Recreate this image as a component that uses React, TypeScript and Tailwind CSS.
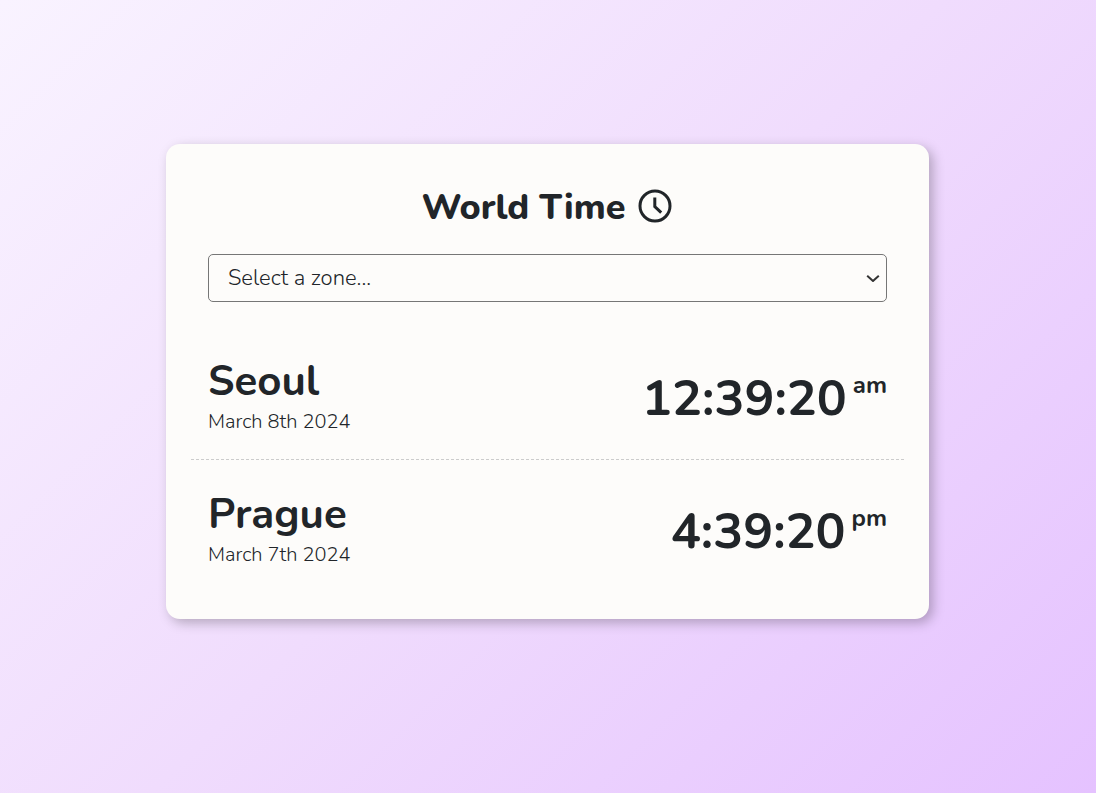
import { useState } from "react";

type Clock = {
  city: string;
  date: string;
  time: string;
  period: "am" | "pm";
};

const clocks: Clock[] = [
  { city: "Seoul", date: "March 8th 2024", time: "12:39:20", period: "am" },
  { city: "Prague", date: "March 7th 2024", time: "4:39:20", period: "pm" },
];

function ClockIcon() {
  return (
    <svg className="mb-1 size-9" viewBox="0 0 36 36" fill="none" stroke="currentColor" strokeWidth="3" aria-hidden="true">
      <circle cx="18" cy="18" r="15" />
      <path d="M17.8 9.5v9l6.4 6.2" />
    </svg>
  );
}

function ClockRow({ city, date, time, period }: Clock) {
  return (
    <li className="flex items-center justify-between border-b border-dashed border-[#cccccc] px-[17px] pt-[30px] pb-[22px] last:border-b-0">
      <div>
        <h2 className="text-[42px] leading-[50px] font-bold">{city}</h2>
        <p className="text-[20px] leading-[30px] font-light">{date}</p>
      </div>
      <p className="flex items-start gap-1.5 pt-1 font-bold">
        <span className="text-[50px] leading-[60px]">{time}</span>
        <span className="text-[24px] leading-8">{period}</span>
      </p>
    </li>
  );
}

export default function App() {
  const [zone, setZone] = useState("");

  return (
    <div className="flex min-h-screen items-center justify-center bg-[linear-gradient(135deg,#f9f3ff,#f0dcfd_50%,#e5c2ff)] pr-[17px] pb-[30px] pl-4 font-['Nunito','Lato',sans-serif] text-[#212529]">
      <main className="w-full max-w-[763px] rounded-[14px] bg-[#fdfcfa] px-[25px] pt-[38px] pb-[27px] shadow-[4px_4px_12px_rgba(0,0,0,0.25)]">
        <h1 className="flex items-center justify-center gap-3 text-[36px] leading-[52px] font-extrabold">
          World Time
          <ClockIcon />
        </h1>
        <div className="relative mt-5 px-[17px]">
          <select
            aria-label="Time zone"
            value={zone}
            onChange={(event) => setZone(event.target.value)}
            className="block h-12 w-full appearance-none rounded-[5px] border border-[#767676] bg-[#fdfcfa] pr-8 pl-[19px] text-[22px] font-light"
          >
            <option value="">Select a zone...</option>
            <option value="Asia/Seoul">Seoul</option>
            <option value="Europe/Prague">Prague</option>
          </select>
          <svg
            className="pointer-events-none absolute top-1/2 right-6 h-2 w-3.5 -translate-y-1/2"
            viewBox="0 0 14 8"
            fill="none"
            stroke="#333333"
            strokeWidth="2"
            aria-hidden="true"
          >
            <path d="M1.2 1.7 7 7l5.8-5.3" />
          </svg>
        </div>
        <ul className="mt-[25px]">
          {clocks.map((clock) => (
            <ClockRow key={clock.city} {...clock} />
          ))}
        </ul>
      </main>
    </div>
  );
}
